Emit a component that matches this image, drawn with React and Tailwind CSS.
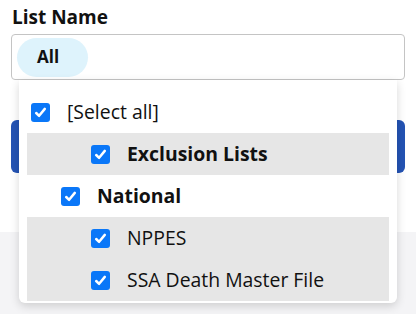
import { useState } from 'react'

const items = [
  { label: '[Select all]', indent: 'pl-1', bold: false, shaded: false },
  { label: 'Exclusion Lists', indent: 'pl-[64px]', bold: true, shaded: true },
  { label: 'National', indent: 'pl-[34px]', bold: true, shaded: false },
  { label: 'NPPES', indent: 'pl-[64px]', bold: false, shaded: true },
  { label: 'SSA Death Master File', indent: 'pl-[64px]', bold: false, shaded: true },
]

function Check() {
  return (
    <span className="flex h-[19px] w-[19px] flex-shrink-0 items-center justify-center rounded-[3px] bg-[#0a77f8]">
      <svg width="19" height="19" viewBox="0 0 19 19" fill="none">
        <path d="M5.2 10 L8.1 12.8 L13.8 5.9" stroke="white" strokeWidth="2.5" strokeLinecap="round" strokeLinejoin="round" />
      </svg>
    </span>
  )
}

export default function App() {
  const [checked] = useState(items.map(() => true))

  return (
    <div className="min-h-[314px] bg-[#f4f4f6] font-['Open_Sans',sans-serif] text-[#111]">
      <div className="bg-white px-[11px] pt-[4px] pb-[59px]">
        <label className="block pl-px text-[19px] font-bold leading-[26px] text-[#111]">List Name</label>

        {/* Select box */}
        <div className="relative mt-[4px]">
          <div className="flex h-[46px] items-center rounded-[4px] border border-[#c4c4c4] bg-white px-[5px]">
            <span className="flex h-[39px] w-[71px] items-center rounded-full bg-[#def3fc] pl-[20px] text-[17px] font-bold">
              All
            </span>
          </div>

          {/* Dropdown */}
          <div className="absolute left-[8px] right-[8px] top-[46px] z-10 rounded-b-[6px] bg-white px-[8px] pt-[11px] pb-[2px] shadow-[0_3px_10px_rgba(0,0,0,0.16)]">
            {items.map((it, i) => (
              <div
                key={it.label}
                className={`flex h-[42px] items-center gap-[17px] ${it.indent} ${it.shaded ? 'bg-[#e6e6e6]' : ''}`}
              >
                {checked[i] && <Check />}
                <span className={`text-[19.4px] leading-[26px] ${it.bold ? 'font-bold' : ''}`}>{it.label}</span>
              </div>
            ))}
          </div>
        </div>

        <button className="mt-[40px] block h-[53px] w-full rounded-[6px] bg-[#2453b4]" />
      </div>
    </div>
  )
}
